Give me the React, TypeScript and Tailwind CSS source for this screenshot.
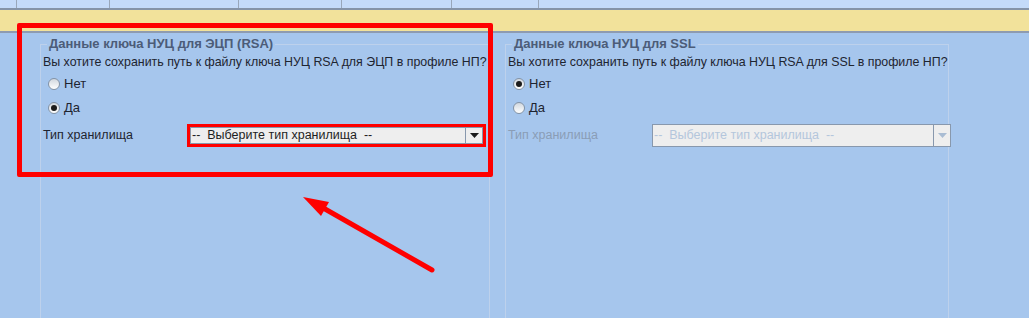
import React from "react";

type RadioProps = { checked: boolean; label: string };

function Radio({ checked, label }: RadioProps) {
  return (
    <div className="flex h-[22px] items-center pl-[5px]">
      <span className="flex h-[12px] w-[12px] items-center justify-center rounded-full border border-[#8393a6] bg-gradient-to-b from-[#d2d8df] to-[#ffffff]">
        {checked && <span className="h-[6px] w-[6px] rounded-full bg-[#1c1c1c]" />}
      </span>
      <span className="ml-[4px] text-[13px] text-[#1e2430]">{label}</span>
    </div>
  );
}

type SelectProps = { disabled?: boolean; highlighted?: boolean };

function StorageSelect({ disabled, highlighted }: SelectProps) {
  return (
    <div
      className={`flex h-[23px] w-[299px] shrink-0 ${
        highlighted ? "border-[3px] border-[#ff0000]" : ""
      }`}
    >
      <div className="flex flex-1 border border-[#8898ad] bg-[#eeeeee]">
        <span
          className={`flex flex-1 items-center pl-[1px] text-[12.5px] whitespace-pre ${
            disabled ? "text-[#b4c6dc]" : "text-[#1e1e1e]"
          }`}
        >
          {"--  Выберите тип хранилища  --"}
        </span>
        <span className="flex w-[17px] items-center justify-center border-l border-[#8898ad] bg-[#eeeeee]">
          <svg width="9" height="5" viewBox="0 0 9 5">
            <path d="M0 0h9L4.5 5z" fill={disabled ? "#a9bcd3" : "#1a1a1a"} />
          </svg>
        </span>
      </div>
    </div>
  );
}

type GroupProps = {
  title: string;
  question: string;
  yes: boolean;
  disabled?: boolean;
  highlighted?: boolean;
  width: string;
};

function KeyGroup({ title, question, yes, disabled, highlighted, width }: GroupProps) {
  return (
    <fieldset className={`${width} h-[300px] min-w-0 shrink-0 border border-[#bdd1ec] px-[2px]`}>
      <legend className="ml-[4px] px-[2px] text-[13px] leading-[16px] font-bold text-[#4c5c78]">
        {title}
      </legend>
      <p className="mt-[2px] h-[16px] text-[12.4px] leading-[16px] whitespace-nowrap text-[#1e2430]">
        {question}
      </p>
      <div className="mt-[3px] flex flex-col gap-[2px]">
        <Radio checked={!yes} label="Нет" />
        <Radio checked={yes} label="Да" />
      </div>
      <div className="mt-[5px] flex items-center">
        <span
          className={`w-[144px] shrink-0 text-[12.5px] ${disabled ? "text-[#8a9db6]" : "text-[#1e2430]"}`}
        >
          Тип хранилища
        </span>
        <StorageSelect disabled={disabled} highlighted={highlighted} />
      </div>
    </fieldset>
  );
}

const columns = [17, 93, 129, 103, 110, 87];

export default function App() {
  return (
    <div className="relative h-[318px] w-[1029px] overflow-hidden bg-[#a6c6ed] font-['Liberation_Sans',Arial,sans-serif]">
      {/* header strip of the table above */}
      <div className="flex h-[10px] border-b-2 border-[#8594a8] bg-[#c4dbf9]">
        {columns.map((w, i) => (
          <div key={i} className="h-full border-r border-[#98a7ba]" style={{ width: w }} />
        ))}
      </div>
      {/* yellow band */}
      <div className="h-[23px] border-b-2 border-[#8e9bb0] bg-[#f2e29b]" />

      <div className="flex gap-[15px] pt-[3px] pl-[40px]">
        <KeyGroup
          title="Данные ключа НУЦ для ЭЦП (RSA)"
          question="Вы хотите сохранить путь к файлу ключа НУЦ RSA для ЭЦП в профиле НП?"
          yes
          highlighted
          width="w-[450px]"
        />
        <KeyGroup
          title="Данные ключа НУЦ для SSL"
          question="Вы хотите сохранить путь к файлу ключа НУЦ RSA для SSL в профиле НП?"
          yes={false}
          disabled
          width="w-[444px]"
        />
      </div>

      {/* annotation: red frame */}
      <div className="pointer-events-none absolute top-[23px] left-[17px] h-[154px] w-[476px] rounded-[2px] border-[5px] border-[#ff0000]" />

      {/* annotation: arrow */}
      <svg
        className="pointer-events-none absolute top-0 left-0"
        width="1029"
        height="318"
        viewBox="0 0 1029 318"
      >
        <line x1="432" y1="270" x2="318" y2="205" stroke="#ff0000" strokeWidth="5" strokeLinecap="round" />
        <polygon points="303,197 329,202 321,216" fill="#ff0000" />
      </svg>
    </div>
  );
}
